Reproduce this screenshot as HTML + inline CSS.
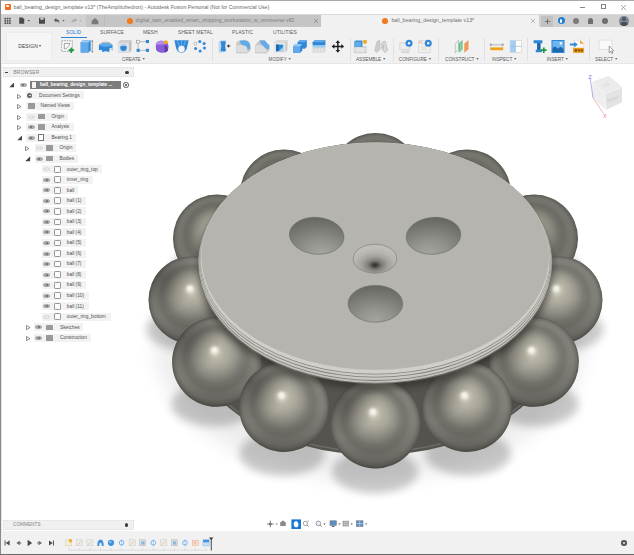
<!DOCTYPE html><html><head><meta charset="utf-8"><title>Fusion</title><style>
*{margin:0;padding:0;box-sizing:border-box}
html,body{width:634px;height:555px;overflow:hidden;background:#fff}
body{position:relative;font-family:"Liberation Sans",sans-serif;color:#555}
.abs{position:absolute}
.t{position:absolute;white-space:nowrap;line-height:1}
#title{left:0;top:0;width:634px;height:14px;background:#fff}
#tabbar{left:0;top:14px;width:634px;height:13px;background:#d1d1d1}
#ribbon{left:0;top:27px;width:634px;height:37px;background:#f1f1f1;border-bottom:1px solid #e6e6e6}
#canvas{left:0;top:64px;width:634px;height:467px;background:#fff}
.rt{font-size:5px;color:#5c5c5c;top:30px;letter-spacing:0.05px}
.gl{font-size:4.7px;color:#5a5a5a;top:57.8px}
.sep{position:absolute;top:38px;width:1px;height:23px;background:#e0e0e0}
.ic{position:absolute;top:41px;width:13px;height:13px}
.lbl{position:absolute;height:8px;background:#f2f2f2}
.lt{position:absolute;white-space:nowrap;line-height:1;font-size:4.8px;color:#4e4e4e}
.eye{position:absolute;width:7px;height:4px;border-radius:50%;background:#a9a9a9}
.eye.off{background:#dedede}
.fold{position:absolute;width:7px;height:5.4px;background:#9a9a9a;border-radius:0.6px}
.body{position:absolute;width:6.4px;height:6.8px;border:0.7px solid #969696;border-radius:1.2px;background:#fbfbfb}
.arr{position:absolute;width:0;height:0;border-style:solid}
</style></head><body>
<div id="canvas" class="abs"></div>
<svg class="abs" style="left:0;top:0" width="634" height="555" viewBox="0 0 634 555">
<defs>
<filter id="blur8" x="-50%" y="-50%" width="200%" height="200%"><feGaussianBlur stdDeviation="4.2"/></filter>
<filter id="blur3" x="-10%" y="-10%" width="120%" height="120%"><feGaussianBlur stdDeviation="3.2"/></filter>
<filter id="blur14" x="-50%" y="-50%" width="200%" height="200%"><feGaussianBlur stdDeviation="10"/></filter>
<radialGradient id="bg0" gradientUnits="userSpaceOnUse" cx="375.5" cy="423.5" r="44.9" fx="372.5" fy="411.0"><stop offset="0" stop-color="#ffffff"/><stop offset="0.05" stop-color="#fbf9ee"/><stop offset="0.085" stop-color="#dfdccf"/><stop offset="0.13" stop-color="#c4c1b3"/><stop offset="0.2" stop-color="#b5b2a4"/><stop offset="0.32" stop-color="#a9a79a"/><stop offset="0.43" stop-color="#9a988d"/><stop offset="0.52" stop-color="#8a8980"/><stop offset="0.6" stop-color="#7b7a73"/><stop offset="0.7" stop-color="#75746d"/><stop offset="0.79" stop-color="#7f7e77"/><stop offset="0.88" stop-color="#81807a"/><stop offset="0.95" stop-color="#72716a"/><stop offset="1" stop-color="#5b5a54"/></radialGradient>
<radialGradient id="bg30" gradientUnits="userSpaceOnUse" cx="467.0" cy="407.0" r="44.9" fx="464.0" fy="394.5"><stop offset="0" stop-color="#ffffff"/><stop offset="0.05" stop-color="#fbf9ee"/><stop offset="0.085" stop-color="#dfdccf"/><stop offset="0.13" stop-color="#c4c1b3"/><stop offset="0.2" stop-color="#b5b2a4"/><stop offset="0.32" stop-color="#a9a79a"/><stop offset="0.43" stop-color="#9a988d"/><stop offset="0.52" stop-color="#8a8980"/><stop offset="0.6" stop-color="#7b7a73"/><stop offset="0.7" stop-color="#75746d"/><stop offset="0.79" stop-color="#7f7e77"/><stop offset="0.88" stop-color="#81807a"/><stop offset="0.95" stop-color="#72716a"/><stop offset="1" stop-color="#5b5a54"/></radialGradient>
<radialGradient id="bg60" gradientUnits="userSpaceOnUse" cx="534.0" cy="361.9" r="44.9" fx="531.0" fy="349.4"><stop offset="0" stop-color="#ffffff"/><stop offset="0.05" stop-color="#fbf9ee"/><stop offset="0.085" stop-color="#dfdccf"/><stop offset="0.13" stop-color="#c4c1b3"/><stop offset="0.2" stop-color="#b5b2a4"/><stop offset="0.32" stop-color="#a9a79a"/><stop offset="0.43" stop-color="#9a988d"/><stop offset="0.52" stop-color="#8a8980"/><stop offset="0.6" stop-color="#7b7a73"/><stop offset="0.7" stop-color="#75746d"/><stop offset="0.79" stop-color="#7f7e77"/><stop offset="0.88" stop-color="#81807a"/><stop offset="0.95" stop-color="#72716a"/><stop offset="1" stop-color="#5b5a54"/></radialGradient>
<radialGradient id="bg90" gradientUnits="userSpaceOnUse" cx="558.5" cy="300.2" r="44.0" fx="555.5" fy="287.8"><stop offset="0" stop-color="#ffffff"/><stop offset="0.05" stop-color="#fbf9ee"/><stop offset="0.085" stop-color="#dfdccf"/><stop offset="0.13" stop-color="#c4c1b3"/><stop offset="0.2" stop-color="#b5b2a4"/><stop offset="0.32" stop-color="#a9a79a"/><stop offset="0.43" stop-color="#9a988d"/><stop offset="0.52" stop-color="#8a8980"/><stop offset="0.6" stop-color="#7b7a73"/><stop offset="0.7" stop-color="#75746d"/><stop offset="0.79" stop-color="#7f7e77"/><stop offset="0.88" stop-color="#81807a"/><stop offset="0.95" stop-color="#72716a"/><stop offset="1" stop-color="#5b5a54"/></radialGradient>
<radialGradient id="bg120" gradientUnits="userSpaceOnUse" cx="534.0" cy="238.6" r="44.0" fx="531.0" fy="226.1"><stop offset="0" stop-color="#ffffff"/><stop offset="0.05" stop-color="#fbf9ee"/><stop offset="0.085" stop-color="#dfdccf"/><stop offset="0.13" stop-color="#c4c1b3"/><stop offset="0.2" stop-color="#b5b2a4"/><stop offset="0.32" stop-color="#a9a79a"/><stop offset="0.43" stop-color="#9a988d"/><stop offset="0.52" stop-color="#8a8980"/><stop offset="0.6" stop-color="#7b7a73"/><stop offset="0.7" stop-color="#75746d"/><stop offset="0.79" stop-color="#7f7e77"/><stop offset="0.88" stop-color="#81807a"/><stop offset="0.95" stop-color="#72716a"/><stop offset="1" stop-color="#5b5a54"/></radialGradient>
<radialGradient id="bg150" gradientUnits="userSpaceOnUse" cx="467.0" cy="193.5" r="44.0" fx="464.0" fy="181.0"><stop offset="0" stop-color="#ffffff"/><stop offset="0.05" stop-color="#fbf9ee"/><stop offset="0.085" stop-color="#dfdccf"/><stop offset="0.13" stop-color="#c4c1b3"/><stop offset="0.2" stop-color="#b5b2a4"/><stop offset="0.32" stop-color="#a9a79a"/><stop offset="0.43" stop-color="#9a988d"/><stop offset="0.52" stop-color="#8a8980"/><stop offset="0.6" stop-color="#7b7a73"/><stop offset="0.7" stop-color="#75746d"/><stop offset="0.79" stop-color="#7f7e77"/><stop offset="0.88" stop-color="#81807a"/><stop offset="0.95" stop-color="#72716a"/><stop offset="1" stop-color="#5b5a54"/></radialGradient>
<radialGradient id="bg180" gradientUnits="userSpaceOnUse" cx="375.5" cy="177.0" r="44.0" fx="372.5" fy="164.5"><stop offset="0" stop-color="#ffffff"/><stop offset="0.05" stop-color="#fbf9ee"/><stop offset="0.085" stop-color="#dfdccf"/><stop offset="0.13" stop-color="#c4c1b3"/><stop offset="0.2" stop-color="#b5b2a4"/><stop offset="0.32" stop-color="#a9a79a"/><stop offset="0.43" stop-color="#9a988d"/><stop offset="0.52" stop-color="#8a8980"/><stop offset="0.6" stop-color="#7b7a73"/><stop offset="0.7" stop-color="#75746d"/><stop offset="0.79" stop-color="#7f7e77"/><stop offset="0.88" stop-color="#81807a"/><stop offset="0.95" stop-color="#72716a"/><stop offset="1" stop-color="#5b5a54"/></radialGradient>
<radialGradient id="bg210" gradientUnits="userSpaceOnUse" cx="284.0" cy="193.5" r="44.0" fx="281.0" fy="181.0"><stop offset="0" stop-color="#ffffff"/><stop offset="0.05" stop-color="#fbf9ee"/><stop offset="0.085" stop-color="#dfdccf"/><stop offset="0.13" stop-color="#c4c1b3"/><stop offset="0.2" stop-color="#b5b2a4"/><stop offset="0.32" stop-color="#a9a79a"/><stop offset="0.43" stop-color="#9a988d"/><stop offset="0.52" stop-color="#8a8980"/><stop offset="0.6" stop-color="#7b7a73"/><stop offset="0.7" stop-color="#75746d"/><stop offset="0.79" stop-color="#7f7e77"/><stop offset="0.88" stop-color="#81807a"/><stop offset="0.95" stop-color="#72716a"/><stop offset="1" stop-color="#5b5a54"/></radialGradient>
<radialGradient id="bg240" gradientUnits="userSpaceOnUse" cx="217.0" cy="238.6" r="44.0" fx="214.0" fy="226.1"><stop offset="0" stop-color="#ffffff"/><stop offset="0.05" stop-color="#fbf9ee"/><stop offset="0.085" stop-color="#dfdccf"/><stop offset="0.13" stop-color="#c4c1b3"/><stop offset="0.2" stop-color="#b5b2a4"/><stop offset="0.32" stop-color="#a9a79a"/><stop offset="0.43" stop-color="#9a988d"/><stop offset="0.52" stop-color="#8a8980"/><stop offset="0.6" stop-color="#7b7a73"/><stop offset="0.7" stop-color="#75746d"/><stop offset="0.79" stop-color="#7f7e77"/><stop offset="0.88" stop-color="#81807a"/><stop offset="0.95" stop-color="#72716a"/><stop offset="1" stop-color="#5b5a54"/></radialGradient>
<radialGradient id="bg270" gradientUnits="userSpaceOnUse" cx="192.5" cy="300.2" r="44.0" fx="189.5" fy="287.8"><stop offset="0" stop-color="#ffffff"/><stop offset="0.05" stop-color="#fbf9ee"/><stop offset="0.085" stop-color="#dfdccf"/><stop offset="0.13" stop-color="#c4c1b3"/><stop offset="0.2" stop-color="#b5b2a4"/><stop offset="0.32" stop-color="#a9a79a"/><stop offset="0.43" stop-color="#9a988d"/><stop offset="0.52" stop-color="#8a8980"/><stop offset="0.6" stop-color="#7b7a73"/><stop offset="0.7" stop-color="#75746d"/><stop offset="0.79" stop-color="#7f7e77"/><stop offset="0.88" stop-color="#81807a"/><stop offset="0.95" stop-color="#72716a"/><stop offset="1" stop-color="#5b5a54"/></radialGradient>
<radialGradient id="bg300" gradientUnits="userSpaceOnUse" cx="217.0" cy="361.9" r="44.9" fx="214.0" fy="349.4"><stop offset="0" stop-color="#ffffff"/><stop offset="0.05" stop-color="#fbf9ee"/><stop offset="0.085" stop-color="#dfdccf"/><stop offset="0.13" stop-color="#c4c1b3"/><stop offset="0.2" stop-color="#b5b2a4"/><stop offset="0.32" stop-color="#a9a79a"/><stop offset="0.43" stop-color="#9a988d"/><stop offset="0.52" stop-color="#8a8980"/><stop offset="0.6" stop-color="#7b7a73"/><stop offset="0.7" stop-color="#75746d"/><stop offset="0.79" stop-color="#7f7e77"/><stop offset="0.88" stop-color="#81807a"/><stop offset="0.95" stop-color="#72716a"/><stop offset="1" stop-color="#5b5a54"/></radialGradient>
<radialGradient id="bg330" gradientUnits="userSpaceOnUse" cx="284.0" cy="407.0" r="44.9" fx="281.0" fy="394.5"><stop offset="0" stop-color="#ffffff"/><stop offset="0.05" stop-color="#fbf9ee"/><stop offset="0.085" stop-color="#dfdccf"/><stop offset="0.13" stop-color="#c4c1b3"/><stop offset="0.2" stop-color="#b5b2a4"/><stop offset="0.32" stop-color="#a9a79a"/><stop offset="0.43" stop-color="#9a988d"/><stop offset="0.52" stop-color="#8a8980"/><stop offset="0.6" stop-color="#7b7a73"/><stop offset="0.7" stop-color="#75746d"/><stop offset="0.79" stop-color="#7f7e77"/><stop offset="0.88" stop-color="#81807a"/><stop offset="0.95" stop-color="#72716a"/><stop offset="1" stop-color="#5b5a54"/></radialGradient>
<radialGradient id="holeL" cx="0.62" cy="0.95" r="0.95"><stop offset="0" stop-color="#a5a59f"/><stop offset="0.35" stop-color="#92928c"/><stop offset="0.7" stop-color="#7a7a75"/><stop offset="1" stop-color="#666662"/></radialGradient>
<radialGradient id="holeR" cx="0.38" cy="0.95" r="0.95"><stop offset="0" stop-color="#a5a59f"/><stop offset="0.35" stop-color="#92928c"/><stop offset="0.7" stop-color="#7a7a75"/><stop offset="1" stop-color="#666662"/></radialGradient>
<radialGradient id="holeB" cx="0.5" cy="0.95" r="0.95"><stop offset="0" stop-color="#a5a59f"/><stop offset="0.35" stop-color="#92928c"/><stop offset="0.7" stop-color="#7a7a75"/><stop offset="1" stop-color="#666662"/></radialGradient>
<radialGradient id="csink" cx="0.5" cy="0.72" r="0.62"><stop offset="0" stop-color="#2c2c2a"/><stop offset="0.09" stop-color="#454542"/><stop offset="0.24" stop-color="#7c7b76"/><stop offset="0.48" stop-color="#a2a19b"/><stop offset="0.75" stop-color="#b7b6b0"/><stop offset="1" stop-color="#bfbeb8"/></radialGradient>
<linearGradient id="bodyg" x1="0" y1="0" x2="1" y2="0"><stop offset="0" stop-color="#52514d"/><stop offset="0.5" stop-color="#565551"/><stop offset="1" stop-color="#4e4d49"/></linearGradient>
<linearGradient id="topshade" gradientUnits="userSpaceOnUse" x1="0" y1="0" x2="0" y2="1"><stop offset="0" stop-color="#000" stop-opacity="0.25"/><stop offset="1" stop-color="#000" stop-opacity="0"/></linearGradient>
<radialGradient id="sh0" gradientUnits="userSpaceOnUse" cx="341.8" cy="398.8" r="38.2"><stop offset="0" stop-color="#2a2925" stop-opacity="0.42"/><stop offset="0.5" stop-color="#2a2925" stop-opacity="0.22"/><stop offset="1" stop-color="#2a2925" stop-opacity="0"/></radialGradient>
<radialGradient id="sh30" gradientUnits="userSpaceOnUse" cx="433.3" cy="382.3" r="38.2"><stop offset="0" stop-color="#2a2925" stop-opacity="0.42"/><stop offset="0.5" stop-color="#2a2925" stop-opacity="0.22"/><stop offset="1" stop-color="#2a2925" stop-opacity="0"/></radialGradient>
<radialGradient id="sh60" gradientUnits="userSpaceOnUse" cx="500.3" cy="337.2" r="38.2"><stop offset="0" stop-color="#2a2925" stop-opacity="0.42"/><stop offset="0.5" stop-color="#2a2925" stop-opacity="0.22"/><stop offset="1" stop-color="#2a2925" stop-opacity="0"/></radialGradient>
<radialGradient id="sh90" gradientUnits="userSpaceOnUse" cx="525.5" cy="276.1" r="37.4"><stop offset="0" stop-color="#2a2925" stop-opacity="0.42"/><stop offset="0.5" stop-color="#2a2925" stop-opacity="0.22"/><stop offset="1" stop-color="#2a2925" stop-opacity="0"/></radialGradient>
<radialGradient id="sh120" gradientUnits="userSpaceOnUse" cx="501.0" cy="214.4" r="37.4"><stop offset="0" stop-color="#2a2925" stop-opacity="0.42"/><stop offset="0.5" stop-color="#2a2925" stop-opacity="0.22"/><stop offset="1" stop-color="#2a2925" stop-opacity="0"/></radialGradient>
<radialGradient id="sh150" gradientUnits="userSpaceOnUse" cx="434.0" cy="169.3" r="37.4"><stop offset="0" stop-color="#2a2925" stop-opacity="0.42"/><stop offset="0.5" stop-color="#2a2925" stop-opacity="0.22"/><stop offset="1" stop-color="#2a2925" stop-opacity="0"/></radialGradient>
<radialGradient id="sh180" gradientUnits="userSpaceOnUse" cx="342.5" cy="152.8" r="37.4"><stop offset="0" stop-color="#2a2925" stop-opacity="0.42"/><stop offset="0.5" stop-color="#2a2925" stop-opacity="0.22"/><stop offset="1" stop-color="#2a2925" stop-opacity="0"/></radialGradient>
<radialGradient id="sh210" gradientUnits="userSpaceOnUse" cx="251.0" cy="169.3" r="37.4"><stop offset="0" stop-color="#2a2925" stop-opacity="0.42"/><stop offset="0.5" stop-color="#2a2925" stop-opacity="0.22"/><stop offset="1" stop-color="#2a2925" stop-opacity="0"/></radialGradient>
<radialGradient id="sh240" gradientUnits="userSpaceOnUse" cx="184.0" cy="214.4" r="37.4"><stop offset="0" stop-color="#2a2925" stop-opacity="0.42"/><stop offset="0.5" stop-color="#2a2925" stop-opacity="0.22"/><stop offset="1" stop-color="#2a2925" stop-opacity="0"/></radialGradient>
<radialGradient id="sh270" gradientUnits="userSpaceOnUse" cx="159.5" cy="276.1" r="37.4"><stop offset="0" stop-color="#2a2925" stop-opacity="0.42"/><stop offset="0.5" stop-color="#2a2925" stop-opacity="0.22"/><stop offset="1" stop-color="#2a2925" stop-opacity="0"/></radialGradient>
<radialGradient id="sh300" gradientUnits="userSpaceOnUse" cx="183.3" cy="337.2" r="38.2"><stop offset="0" stop-color="#2a2925" stop-opacity="0.42"/><stop offset="0.5" stop-color="#2a2925" stop-opacity="0.22"/><stop offset="1" stop-color="#2a2925" stop-opacity="0"/></radialGradient>
<radialGradient id="sh330" gradientUnits="userSpaceOnUse" cx="250.3" cy="382.3" r="38.2"><stop offset="0" stop-color="#2a2925" stop-opacity="0.42"/><stop offset="0.5" stop-color="#2a2925" stop-opacity="0.22"/><stop offset="1" stop-color="#2a2925" stop-opacity="0"/></radialGradient>
<linearGradient id="bd0" gradientUnits="userSpaceOnUse" x1="0" y1="423.5" x2="0" y2="468.4"><stop offset="0" stop-color="#24231f" stop-opacity="0"/><stop offset="0.55" stop-color="#24231f" stop-opacity="0.14"/><stop offset="1" stop-color="#24231f" stop-opacity="0.36"/></linearGradient>
<linearGradient id="bd30" gradientUnits="userSpaceOnUse" x1="0" y1="407.0" x2="0" y2="451.9"><stop offset="0" stop-color="#24231f" stop-opacity="0"/><stop offset="0.55" stop-color="#24231f" stop-opacity="0.14"/><stop offset="1" stop-color="#24231f" stop-opacity="0.36"/></linearGradient>
<linearGradient id="bd60" gradientUnits="userSpaceOnUse" x1="0" y1="361.9" x2="0" y2="406.8"><stop offset="0" stop-color="#24231f" stop-opacity="0"/><stop offset="0.55" stop-color="#24231f" stop-opacity="0.14"/><stop offset="1" stop-color="#24231f" stop-opacity="0.36"/></linearGradient>
<linearGradient id="bd90" gradientUnits="userSpaceOnUse" x1="0" y1="300.2" x2="0" y2="344.2"><stop offset="0" stop-color="#24231f" stop-opacity="0"/><stop offset="0.55" stop-color="#24231f" stop-opacity="0.14"/><stop offset="1" stop-color="#24231f" stop-opacity="0.36"/></linearGradient>
<linearGradient id="bd120" gradientUnits="userSpaceOnUse" x1="0" y1="238.6" x2="0" y2="282.6"><stop offset="0" stop-color="#24231f" stop-opacity="0"/><stop offset="0.55" stop-color="#24231f" stop-opacity="0.14"/><stop offset="1" stop-color="#24231f" stop-opacity="0.36"/></linearGradient>
<linearGradient id="bd150" gradientUnits="userSpaceOnUse" x1="0" y1="193.5" x2="0" y2="237.5"><stop offset="0" stop-color="#24231f" stop-opacity="0"/><stop offset="0.55" stop-color="#24231f" stop-opacity="0.14"/><stop offset="1" stop-color="#24231f" stop-opacity="0.36"/></linearGradient>
<linearGradient id="bd180" gradientUnits="userSpaceOnUse" x1="0" y1="177.0" x2="0" y2="221.0"><stop offset="0" stop-color="#24231f" stop-opacity="0"/><stop offset="0.55" stop-color="#24231f" stop-opacity="0.14"/><stop offset="1" stop-color="#24231f" stop-opacity="0.36"/></linearGradient>
<linearGradient id="bd210" gradientUnits="userSpaceOnUse" x1="0" y1="193.5" x2="0" y2="237.5"><stop offset="0" stop-color="#24231f" stop-opacity="0"/><stop offset="0.55" stop-color="#24231f" stop-opacity="0.14"/><stop offset="1" stop-color="#24231f" stop-opacity="0.36"/></linearGradient>
<linearGradient id="bd240" gradientUnits="userSpaceOnUse" x1="0" y1="238.6" x2="0" y2="282.6"><stop offset="0" stop-color="#24231f" stop-opacity="0"/><stop offset="0.55" stop-color="#24231f" stop-opacity="0.14"/><stop offset="1" stop-color="#24231f" stop-opacity="0.36"/></linearGradient>
<linearGradient id="bd270" gradientUnits="userSpaceOnUse" x1="0" y1="300.2" x2="0" y2="344.2"><stop offset="0" stop-color="#24231f" stop-opacity="0"/><stop offset="0.55" stop-color="#24231f" stop-opacity="0.14"/><stop offset="1" stop-color="#24231f" stop-opacity="0.36"/></linearGradient>
<linearGradient id="bd300" gradientUnits="userSpaceOnUse" x1="0" y1="361.9" x2="0" y2="406.8"><stop offset="0" stop-color="#24231f" stop-opacity="0"/><stop offset="0.55" stop-color="#24231f" stop-opacity="0.14"/><stop offset="1" stop-color="#24231f" stop-opacity="0.36"/></linearGradient>
<linearGradient id="bd330" gradientUnits="userSpaceOnUse" x1="0" y1="407.0" x2="0" y2="451.9"><stop offset="0" stop-color="#24231f" stop-opacity="0"/><stop offset="0.55" stop-color="#24231f" stop-opacity="0.14"/><stop offset="1" stop-color="#24231f" stop-opacity="0.36"/></linearGradient>
</defs>
<g filter="url(#blur14)" fill="#000" opacity="0.07"><ellipse cx="370" cy="345" rx="215" ry="135"/></g>
<g filter="url(#blur8)" fill="#000" opacity="0.2">
<ellipse cx="375.0" cy="471.5" rx="43" ry="22"/>
<ellipse cx="467.9" cy="453.7" rx="43" ry="22"/>
<ellipse cx="535.9" cy="404.3" rx="43" ry="22"/>
<ellipse cx="560.7" cy="329.3" rx="43" ry="22"/>
<ellipse cx="535.9" cy="267.6" rx="43" ry="22"/>
<ellipse cx="467.9" cy="222.5" rx="43" ry="22"/>
<ellipse cx="375.0" cy="206.0" rx="43" ry="22"/>
<ellipse cx="282.1" cy="222.5" rx="43" ry="22"/>
<ellipse cx="214.1" cy="267.6" rx="43" ry="22"/>
<ellipse cx="189.3" cy="329.2" rx="43" ry="22"/>
<ellipse cx="214.1" cy="404.3" rx="43" ry="22"/>
<ellipse cx="282.1" cy="453.7" rx="43" ry="22"/>
</g>
<path d="M186,326 A189,129 0 0 0 564,326 L564,286 L186,286 Z" fill="url(#bodyg)"/>
<path d="M186,323 A189,129 0 0 0 564,323" fill="none" stroke="#6f6e68" stroke-width="1.2"/>
<circle cx="375.5" cy="177.0" r="44.0" fill="url(#bg180)"/>
<circle cx="375.5" cy="177.0" r="44.0" fill="#2a2925" opacity="0.12"/>
<circle cx="467.0" cy="193.5" r="44.0" fill="url(#bg150)"/>
<circle cx="467.0" cy="193.5" r="44.0" fill="#2a2925" opacity="0.12"/>
<circle cx="284.0" cy="193.5" r="44.0" fill="url(#bg210)"/>
<circle cx="284.0" cy="193.5" r="44.0" fill="#2a2925" opacity="0.12"/>
<circle cx="217.0" cy="238.6" r="44.0" fill="url(#bg240)"/>
<circle cx="217.0" cy="238.6" r="44.0" fill="#2a2925" opacity="0.12"/>
<circle cx="534.0" cy="238.6" r="44.0" fill="url(#bg120)"/>
<circle cx="534.0" cy="238.6" r="44.0" fill="#2a2925" opacity="0.12"/>
<circle cx="558.5" cy="300.2" r="44.0" fill="url(#bg90)"/>
<circle cx="558.5" cy="300.2" r="44.0" fill="url(#sh90)"/><circle cx="558.5" cy="300.2" r="44.0" fill="url(#bd90)"/>
<circle cx="192.5" cy="300.2" r="44.0" fill="url(#bg270)"/>
<circle cx="192.5" cy="300.2" r="44.0" fill="url(#sh270)"/><circle cx="192.5" cy="300.2" r="44.0" fill="url(#bd270)"/>
<circle cx="534.0" cy="361.9" r="44.9" fill="url(#bg60)"/>
<circle cx="534.0" cy="361.9" r="44.9" fill="url(#sh60)"/><circle cx="534.0" cy="361.9" r="44.9" fill="url(#bd60)"/>
<circle cx="217.0" cy="361.9" r="44.9" fill="url(#bg300)"/>
<circle cx="217.0" cy="361.9" r="44.9" fill="url(#sh300)"/><circle cx="217.0" cy="361.9" r="44.9" fill="url(#bd300)"/>
<circle cx="284.0" cy="407.0" r="44.9" fill="url(#bg330)"/>
<circle cx="284.0" cy="407.0" r="44.9" fill="url(#sh330)"/><circle cx="284.0" cy="407.0" r="44.9" fill="url(#bd330)"/>
<circle cx="467.0" cy="407.0" r="44.9" fill="url(#bg30)"/>
<circle cx="467.0" cy="407.0" r="44.9" fill="url(#sh30)"/><circle cx="467.0" cy="407.0" r="44.9" fill="url(#bd30)"/>
<circle cx="375.5" cy="423.5" r="44.9" fill="url(#bg0)"/>
<circle cx="375.5" cy="423.5" r="44.9" fill="url(#sh0)"/><circle cx="375.5" cy="423.5" r="44.9" fill="url(#bd0)"/>
<clipPath id="solid">
<circle cx="375.5" cy="423.5" r="44.9"/>
<circle cx="467.0" cy="407.0" r="44.9"/>
<circle cx="534.0" cy="361.9" r="44.9"/>
<circle cx="558.5" cy="300.2" r="44.0"/>
<circle cx="534.0" cy="238.6" r="44.0"/>
<circle cx="467.0" cy="193.5" r="44.0"/>
<circle cx="375.5" cy="177.0" r="44.0"/>
<circle cx="284.0" cy="193.5" r="44.0"/>
<circle cx="217.0" cy="238.6" r="44.0"/>
<circle cx="192.5" cy="300.2" r="44.0"/>
<circle cx="217.0" cy="361.9" r="44.9"/>
<circle cx="284.0" cy="407.0" r="44.9"/>
<path d="M186,326 A189,129 0 0 0 564,326 L564,286 L186,286 Z"/>
</clipPath>
<g clip-path="url(#solid)"><ellipse cx="375.2" cy="268.5" rx="177.5" ry="121" fill="#1c1b18" opacity="0.45" filter="url(#blur3)"/></g>
<ellipse cx="375.2" cy="263.00" rx="177.30" ry="120.90" fill="#74736d"/>
<ellipse cx="375.2" cy="262.61" rx="176.64" ry="120.09" fill="#c2c1bb"/>
<ellipse cx="375.2" cy="261.74" rx="176.24" ry="119.16" fill="#7d7c76"/>
<ellipse cx="375.2" cy="261.31" rx="176.04" ry="118.69" fill="#c9c8c2"/>
<ellipse cx="375.2" cy="260.15" rx="175.51" ry="117.45" fill="#7d7c76"/>
<ellipse cx="375.2" cy="259.72" rx="175.31" ry="116.98" fill="#cccbc5"/>
<ellipse cx="375.2" cy="258.71" rx="174.84" ry="115.89" fill="#84837d"/>
<ellipse cx="375.2" cy="258.27" rx="174.64" ry="115.43" fill="#d0cfc9"/>
<ellipse cx="375.2" cy="256.49" rx="173.81" ry="113.51" fill="#c0bfb9"/>
<ellipse cx="375.2" cy="256.25" rx="173.70" ry="113.25" fill="#b5b4ae"/>
<ellipse cx="316.7" cy="235.8" rx="27.3" ry="18.4" fill="url(#holeL)" stroke="#6a6a66" stroke-width="0.6" transform="rotate(5 316.7 235.8)"/>
<ellipse cx="433.5" cy="235.8" rx="27.3" ry="18.4" fill="url(#holeR)" stroke="#6a6a66" stroke-width="0.6" transform="rotate(-5 433.5 235.8)"/>
<ellipse cx="375.4" cy="303.8" rx="27.3" ry="18.4" fill="url(#holeB)" stroke="#6a6a66" stroke-width="0.6" transform="rotate(0 375.4 303.8)"/>
<ellipse cx="375" cy="258.7" rx="21.8" ry="14.5" fill="url(#csink)" stroke="#74736e" stroke-width="0.55"/>
</svg>
<div id="title" class="abs"></div>
<div class="abs" style="left:4.7px;top:3.6px;width:6.1px;height:6.4px;background:#f26a1b;border-radius:1.1px"></div>
<div class="abs" style="left:6.4px;top:4.5px;width:2.7px;height:2.7px;background:#fff;border-radius:0.8px"></div>
<div class="t" id="ttl" style="left:13.5px;top:4.5px;font-size:5.24px;color:#6a6a6a">ball_bearing_design_template v13* (TheAmplituhedron) - Autodesk Fusion Personal (Not for Commercial Use)</div>
<div class="abs" style="left:580px;top:6.5px;width:5px;height:0.7px;background:#8a8a8a"></div>
<div class="abs" style="left:601px;top:4px;width:5px;height:5px;border:0.7px solid #858585"></div>
<svg class="abs" style="left:620px;top:3.5px" width="7" height="7" viewBox="0 0 7 7"><path d="M1,1 L6,6 M6,1 L1,6" stroke="#7d7d7d" stroke-width="0.7" fill="none"/></svg>
<div id="tabbar" class="abs"></div>
<div class="abs" style="left:0;top:14px;width:634px;height:1px;background:#d9d9d9"></div>
<div class="abs" style="left:85.6px;top:15px;width:236px;height:12px;background:#c5c5c5"></div>
<div class="abs" style="left:321.3px;top:15px;width:218px;height:12px;background:#f1f1f1"></div>
<div class="abs" style="left:541px;top:15.5px;width:11.5px;height:11px;background:#c1c1c1"></div>
<svg class="abs" style="left:0;top:14px" width="110" height="13" viewBox="0 0 110 13"><g fill="#4a4a4a"><rect x="4.5" y="3.8" width="1.6" height="1.6"/><rect x="6.8" y="3.8" width="1.6" height="1.6"/><rect x="9.1" y="3.8" width="1.6" height="1.6"/><rect x="4.5" y="6.1" width="1.6" height="1.6"/><rect x="6.8" y="6.1" width="1.6" height="1.6"/><rect x="9.1" y="6.1" width="1.6" height="1.6"/><rect x="4.5" y="8.4" width="1.6" height="1.6"/><rect x="6.8" y="8.4" width="1.6" height="1.6"/><rect x="9.1" y="8.4" width="1.6" height="1.6"/><path d="M19.2,3.6 h3.4 l1.6,1.6 v4.6 h-5z"/><path d="M27.6,6 h2.4 l-1.2,1.5z"/><rect x="39" y="3.8" width="6" height="6" rx="0.6"/></g><rect x="40.4" y="3.8" width="3.2" height="2" fill="#cdcdcd"/><path d="M54,6 l2.2,-2 v1.3 q3.2,0 3.2,4 q-1,-2 -3.2,-2 v1.3z" fill="#5a5a5a"/><path d="M62.4,6 h2.2 l-1.1,1.4z" fill="#5a5a5a"/><path d="M77,6 l-2.2,-2 v1.3 q-3.2,0 -3.2,4 q1,-2 3.2,-2 v1.3z" fill="#aaa"/><path d="M79.4,6 h2.2 l-1.1,1.4z" fill="#aaa"/><path d="M91.7,7 l3.3,-3 l3.3,3 v3.2 h-6.6z" fill="#7a7a7a"/></svg>
<div class="abs" style="left:104px;top:15px;width:0.6px;height:12px;background:#bcbcbc"></div>
<div class="abs" style="left:126.7px;top:17.5px;width:6px;height:6px;background:#f07a1f;border-radius:50% 50% 45% 45%"></div>
<div class="t" id="tab1" style="left:135.6px;top:18.2px;font-size:5.24px;color:#808080">digital_twin_enabled_smart_shipping_workstation_w_omniverse v82</div>
<svg class="abs" style="left:313px;top:18px" width="6" height="6" viewBox="0 0 6 6"><path d="M1,1 L5,5 M5,1 L1,5" stroke="#777" stroke-width="0.6" fill="none"/></svg>
<div class="abs" style="left:382.4px;top:17.5px;width:6px;height:6px;background:#f07a1f;border-radius:50% 50% 45% 45%"></div>
<div class="t" id="tab2" style="left:391.4px;top:18.2px;font-size:5.3px;color:#6e6e6e">ball_bearing_design_template v13*</div>
<svg class="abs" style="left:530px;top:18px" width="6" height="6" viewBox="0 0 6 6"><path d="M1,1 L5,5 M5,1 L1,5" stroke="#999" stroke-width="0.6" fill="none"/></svg>
<svg class="abs" style="left:543.5px;top:18px" width="7" height="7" viewBox="0 0 7 7"><path d="M3.5,0.8 V6.2 M0.8,3.5 H6.2" stroke="#555" stroke-width="0.7" fill="none"/></svg>
<div class="abs" style="left:557.5px;top:17.2px;width:7px;height:7px;border-radius:50%;background:#1f7fd1"></div>
<div class="abs" style="left:559.8px;top:18.6px;width:2.6px;height:4.2px;border-radius:50%;background:#fff"></div>
<div class="abs" style="left:572.5px;top:17.6px;width:6.4px;height:6.4px;border-radius:50%;background:#7b7b7b"></div>
<div class="abs" style="left:587.6px;top:17.6px;width:5px;height:6px;border-radius:2.5px 2.5px 0.5px 0.5px;background:#6f6f6f"></div>
<div class="abs" style="left:601.8px;top:17.6px;width:6.4px;height:6.4px;border-radius:50%;background:#6f6f6f"></div>
<div class="abs" style="left:618.5px;top:15.5px;width:10px;height:10.5px;border-radius:50%;background:#7f8792;overflow:hidden"><div class="abs" style="left:3px;top:1.5px;width:4px;height:4.4px;border-radius:50%;background:#4d5562"></div><div class="abs" style="left:1px;top:6px;width:8px;height:6px;border-radius:50% 50% 0 0;background:#454c58"></div></div>
<div id="ribbon" class="abs"></div>
<div class="abs" style="left:5.5px;top:32px;width:46.5px;height:29px;background:#f6f6f6;border:1px solid #ececec;border-radius:1px"></div>
<div class="t" style="left:18.2px;top:43.6px;font-size:5px;color:#3c3c3c;letter-spacing:0.12px">DESIGN</div>
<div class="arr" style="left:39.4px;top:45.2px;border-width:2px 1.5px 0 1.5px;border-color:#444 transparent transparent transparent"></div>
<div class="t rt" id="rt0" style="left:66px;color:#1b7bd0">SOLID</div>
<div class="t rt" id="rt1" style="left:100px">SURFACE</div>
<div class="t rt" id="rt2" style="left:143px">MESH</div>
<div class="t rt" id="rt3" style="left:178px">SHEET METAL</div>
<div class="t rt" id="rt4" style="left:232px">PLASTIC</div>
<div class="t rt" id="rt5" style="left:273px">UTILITIES</div>
<div class="abs" style="left:61.3px;top:36.5px;width:25.3px;height:1px;background:#2a86d8"></div>
<div class="sep" style="left:212.3px"></div>
<div class="sep" style="left:349.5px"></div>
<div class="sep" style="left:392.8px"></div>
<div class="sep" style="left:437.8px"></div>
<div class="sep" style="left:484px"></div>
<div class="sep" style="left:526.6px"></div>
<div class="sep" style="left:588.7px"></div>
<div class="t gl" id="gl0" style="left:122px">CREATE <span style="font-size:3.4px;position:relative;top:-0.4px">&#9660;</span></div>
<div class="t gl" id="gl1" style="left:268.6px">MODIFY <span style="font-size:3.4px;position:relative;top:-0.4px">&#9660;</span></div>
<div class="t gl" id="gl2" style="left:355.9px">ASSEMBLE <span style="font-size:3.4px;position:relative;top:-0.4px">&#9660;</span></div>
<div class="t gl" id="gl3" style="left:398.8px">CONFIGURE <span style="font-size:3.4px;position:relative;top:-0.4px">&#9660;</span></div>
<div class="t gl" id="gl4" style="left:445px">CONSTRUCT <span style="font-size:3.4px;position:relative;top:-0.4px">&#9660;</span></div>
<div class="t gl" id="gl5" style="left:492px">INSPECT <span style="font-size:3.4px;position:relative;top:-0.4px">&#9660;</span></div>
<div class="t gl" id="gl6" style="left:546.7px">INSERT <span style="font-size:3.4px;position:relative;top:-0.4px">&#9660;</span></div>
<div class="t gl" id="gl7" style="left:595px">SELECT <span style="font-size:3.4px;position:relative;top:-0.4px">&#9660;</span></div>
<svg class="abs" style="left:0;top:27px" width="634" height="37" viewBox="0 27 634 37"><g transform="translate(60.7,39.8)"><rect x="1" y="1" width="10.6" height="10.6" fill="#fbfbfb" stroke="#6a6a6a" stroke-width="0.6" stroke-dasharray="1.6 0.9"/><path d="M3.6,9 V3.6 H9 V5 L5.4,9Z" fill="none" stroke="#7a7a7a" stroke-width="0.7"/><path d="M10.6,7.6 V13.2 M7.8,10.4 H13.4" stroke="#1f9a3c" stroke-width="1.7"/></g><g transform="translate(80.3,39.8)"><path d="M0.4,2.6 L2.6,0.4 H10.4 V10.4 L8.2,12.8 H0.4Z" fill="#2f87d8"/><path d="M0.4,2.6 H8.2 V12.8 H0.4Z" fill="#62abe8"/><path d="M0.4,2.6 L2.6,0.4 H10.4 L8.2,2.6Z" fill="#9fcdf3"/><path d="M12,0.6 V12.4 M11.2,1.8 L12,0.6 L12.8,1.8 M11.2,11.2 L12,12.4 L12.8,11.2" stroke="#555" stroke-width="0.5" fill="none"/></g><g transform="translate(98.5,39.8)"><path d="M0.6,5 Q7.2,-0.6 14,5" fill="none" stroke="#666" stroke-width="0.5"/><path d="M0.4,5.4 Q7.2,1.2 14,5.4 V10.6 Q12.4,9.6 10.8,10.4 V12.4 Q7.2,10.4 3.6,12.4 V10.4 Q2,9.6 0.4,10.6Z" fill="#2f87d8"/><path d="M0.4,5.4 Q7.2,1.2 14,5.4 Q7.2,8.6 0.4,5.4Z" fill="#62abe8"/><path d="M10.8,8.4 Q12.4,7.6 14,8 V10.6 Q12.4,9.6 10.8,10.4Z" fill="#d9d9d9"/></g><g transform="translate(117.5,39.8)"><path d="M0.4,3 L2.8,0.4 H14 V10.4 L11.6,13 H0.4Z" fill="#bdbdbd"/><path d="M0.4,3 H11.6 V13 H0.4Z" fill="#e2e2e2"/><path d="M0.4,3 L2.8,0.4 H14 L11.6,3Z" fill="#d2d2d2"/><circle cx="6" cy="8" r="3.7" fill="#2f87d8"/><path d="M3,6.6 A3.7,3.7 0 0 1 9.4,6.4 Q6.4,4.8 3,6.6Z" fill="#eaf3fb"/><circle cx="6" cy="8" r="3.7" fill="none" stroke="#f2f2f2" stroke-width="0.6"/></g><g transform="translate(136.3,39.8)"><path d="M1.8,1.8 H11 M1.8,10.6 H11 M1.8,1.8 V10.6" stroke="#8a8a8a" stroke-width="0.5" fill="none"/><rect x="0.4" y="0.4" width="2.8" height="2.8" fill="#fff" stroke="#777" stroke-width="0.5"/><rect x="9.6" y="0.2" width="3.1" height="3.1" fill="#2f87d8"/><rect x="0.3" y="9" width="3.1" height="3.1" fill="#2f87d8"/><rect x="9.6" y="9" width="3.1" height="3.1" fill="#2f87d8"/></g><g transform="translate(155.2,39.8)"><path d="M0.6,5 Q1,1.6 5.4,1 Q10,0.4 12.6,3.4 Q14.2,7 12.6,11 Q10,13.6 5,12.8 Q0.8,12.2 0.6,8Z" fill="#8a5cd8"/><path d="M0.6,5 Q1,1.6 5.4,1 Q10,0.4 12.6,3.4 Q8,5.4 0.6,5Z" fill="#b08be9"/><path d="M9.4,4.6 Q13,6 12.6,11 Q11,12.6 9.4,12.9Z" fill="#5f3aa8"/><circle cx="10.6" cy="2.4" r="2" fill="#f5a623"/></g><g transform="translate(174.2,39.8)"><path d="M0.2,0.4 H14.4 L12.6,8.6 Q10.6,13 7.3,13 Q4,13 2,8.6Z" fill="#2f87d8"/><path d="M3,0.4 L5.4,7 M11.6,0.4 L9.2,7 M7.3,0.4 V5.6" stroke="#9fcdf3" stroke-width="0.6"/><circle cx="7.3" cy="9.2" r="3.2" fill="#f4f6f8" stroke="#c9d6e2" stroke-width="0.4"/></g><g transform="translate(193.2,39.8)"><g fill="#2f87d8"><circle cx="6.6" cy="1.6" r="1.5"/><circle cx="10.9" cy="3.6" r="1.5"/><circle cx="11.3" cy="8.2" r="1.5"/><circle cx="6.9" cy="11.2" r="1.5"/><circle cx="2.4" cy="8.6" r="1.5"/></g><circle cx="2.2" cy="3.8" r="1.4" fill="#fff" stroke="#777" stroke-width="0.5"/></g><g transform="translate(218.2,39.8)"><path d="M0.4,2.4 L2.4,0.4 H8 V10.6 L6,12.8 H0.4Z" fill="#c5d5e6"/><path d="M2.4,1.4 H7.6 Q6,6.6 7.6,11.4 H2.4 Q4,6.6 2.4,1.4Z" fill="#2f87d8"/><path d="M12.4,6.2 H9.4 M10.6,5 L9.2,6.2 L10.6,7.4Z" stroke="#222" stroke-width="0.6" fill="#222"/></g><g transform="translate(236,39.8)"><path d="M0.4,5 Q0.6,1 5,0.6 H9 Q14,1 14.2,6.4 V10.4 L11.6,13 H0.4Z" fill="#c9c9c9" stroke="#b0b0b0" stroke-width="0.4"/><path d="M0.4,5.4 H6 Q11.6,5.4 11.6,10 V13 H0.4Z" fill="#dedede"/><path d="M5,0.6 H9 Q14,1 14.2,6.4 V9 L11.6,10.2 Q11.6,5.4 6,5.2 L3.6,2.2 Q4,0.8 5,0.6Z" fill="#62abe8"/><path d="M0.4,13 H11.6" stroke="#b5b5b5" stroke-width="0.5"/></g><g transform="translate(255,39.8)"><path d="M0.4,5.4 L5,0.6 H9.6 L14.2,5.6 V10.4 L11.6,13 H0.4Z" fill="#c9c9c9" stroke="#b0b0b0" stroke-width="0.4"/><path d="M0.4,5.4 H7.6 L11.6,9.4 V13 H0.4Z" fill="#dedede"/><path d="M5,0.6 H9.6 L14.2,5.6 V8.6 L11.6,9.6 L7.4,5.4 L4.6,2Z" fill="#62abe8"/><path d="M0.4,13 H11.6" stroke="#b5b5b5" stroke-width="0.5"/></g><g transform="translate(274,39.8)"><path d="M0.4,3 L3,0.4 H13.6 V10.4 L11,13 H0.4Z" fill="#cfcfcf"/><path d="M0.4,3 H11 V13 H0.4Z" fill="#e8e8e8"/><path d="M0.4,3 L3,0.4 H13.6 L11,3Z" fill="#dcdcdc"/><rect x="2" y="4.8" width="7.2" height="6.6" fill="#2f87d8"/><path d="M4.6,11.4 L9.2,7 V11.4Z" fill="#9fcdf3"/><path d="M2,4.8 H4.6 V11.4 H2Z" fill="#1f66b0"/></g><g transform="translate(292.6,39.8)"><path d="M5,2.4 L7,0.4 H14.2 V7 L12.2,9 H5Z" fill="#2f87d8"/><path d="M5,2.4 L7,0.4 H14.2 L12.2,2.4Z" fill="#62abe8"/><path d="M0.4,6.4 L2.4,4.4 H9.6 V11 L7.6,13 H0.4Z" fill="#2f87d8"/><path d="M0.4,6.4 H7.6 V13 H0.4Z" fill="#62abe8"/><path d="M0.4,6.4 L2.4,4.4 H9.6 L7.6,6.4Z" fill="#9fcdf3"/></g><g transform="translate(312.2,39.8)"><path d="M0.4,2.4 L2.4,0.4 H13.2 V5.8 H0.4Z" fill="#2f87d8"/><path d="M0.4,2.4 L2.4,0.4 H13.2 L11.2,2.4Z" fill="#62abe8"/><rect x="0.4" y="5.8" width="12.8" height="2.2" fill="#9fcdf3"/><path d="M0.4,8 H13.2 V11 L11.2,13 H0.4Z" fill="#d4d4d4"/><path d="M0.4,9.6 H12.6 M0.4,11.2 H12 M3.6,8 V13 M6.8,8 V13 M10,8 V13" stroke="#f1f1f1" stroke-width="0.5"/></g><g transform="translate(331.2,39.8)"><path d="M6.65,0.4 L9,3.2 H7.4 V5.9 H10.1 V4.3 L12.9,6.65 L10.1,9 V7.4 H7.4 V10.1 H9 L6.65,12.9 L4.3,10.1 H5.9 V7.4 H3.2 V9 L0.4,6.65 L3.2,4.3 V5.9 H5.9 V3.2 H4.3Z" fill="#222"/></g><g transform="translate(353.8,39.8)"><path d="M0.4,7 H12.4 V13 H0.4Z" fill="#dcdcdc" stroke="#a8a8a8" stroke-width="0.4"/><path d="M0.4,9 H12.4 M0.4,11 H12.4 M4.4,7 V13 M8.4,7 V13" stroke="#f4f4f4" stroke-width="0.5"/><path d="M0.6,1.8 L1.8,0.6 H8.6 V7.2 H0.6Z" fill="#2f87d8"/><path d="M0.6,1.8 H7.4 V7.2 H0.6Z" fill="#62abe8"/><circle cx="11.2" cy="2" r="2.1" fill="#f5a623"/></g><g transform="translate(374,39.8)"><path d="M0.8,11 L2.6,3 Q3.4,0.6 5.8,0.8 L6,9.4 L3,12.6Z" fill="#cdcdcd" stroke="#a9a9a9" stroke-width="0.5"/><path d="M7.6,9 L7.8,3.4 Q9,0.8 11.4,1.4 L13.6,10.6 L10.8,12.8Z" fill="#d8d8d8" stroke="#a9a9a9" stroke-width="0.5"/><path d="M9.4,5 V9" stroke="#a0a0a0" stroke-width="0.6"/></g><g transform="translate(399.4,39.8)"><path d="M0.4,3 H10.4 V10 H0.4Z" fill="#ececec" stroke="#c2c2c2" stroke-width="0.5"/><path d="M1.6,11.4 H10 M1.6,12.8 H10 M8.6,10.4 V13.2" stroke="#bdbdbd" stroke-width="0.5"/><circle cx="9.6" cy="3.4" r="3.5" fill="#2f87d8"/><circle cx="9.6" cy="3.4" r="1.2" fill="#fff"/></g><g transform="translate(418.2,39.8)"><rect x="0.4" y="1" width="11.4" height="11.6" fill="#f4f4f4" stroke="#c8c8c8" stroke-width="0.5"/><path d="M0.4,4 H11.8 M0.4,7 H11.8 M0.4,10 H11.8 M4.2,1 V12.6 M8,1 V12.6" stroke="#d0d0d0" stroke-width="0.4"/><rect x="0.8" y="1.4" width="3" height="2.2" fill="#e9c9c9"/><rect x="4.6" y="7.4" width="3" height="2.2" fill="#f1e2c2"/><circle cx="10" cy="3.4" r="3.5" fill="#2f87d8"/><circle cx="10" cy="3.4" r="1.2" fill="#fff"/></g><g transform="translate(454.9,39.8)"><path d="M0.4,4 L3.6,0.4 V9.4 L0.4,13Z" fill="#f0f0f0" stroke="#9a9a9a" stroke-width="0.5"/><path d="M3.8,3.6 L7.6,0.2 V9.6 L3.8,13Z" fill="#5bb877"/><path d="M4.8,3.6 L6.6,2 V10 L4.8,11.6Z" fill="#8fd3a3"/><path d="M9.4,3.8 L13.6,0.2 V9.4 L9.4,13Z" fill="#f0975a"/></g><g transform="translate(489.9,39.8)"><path d="M0.4,5 H13.2 M0.4,3.4 V6.6 M13.2,3.4 V6.6 M0.4,5 L2,4.2 M0.4,5 L2,5.8 M13.2,5 L11.6,4.2 M13.2,5 L11.6,5.8" stroke="#8d8d8d" stroke-width="0.6" fill="none"/><rect x="0.4" y="7.6" width="12.8" height="2.8" fill="#f0a118"/></g><g transform="translate(509.7,39.8)"><rect x="0.4" y="0.6" width="11.6" height="12" fill="#fdfdfd" stroke="#c4c4c4" stroke-width="0.5"/><rect x="0.6" y="0.8" width="5" height="11.6" fill="#9fcdf3"/><path d="M5.8,0.6 V12.6 M0.4,6.6 H12" stroke="#9bb7d3" stroke-width="0.6"/></g><g transform="translate(533.2,39.8)"><path d="M0.4,0.4 H9.2 V3.4 H7.2 V10 H8.6 V12.4 H2.6 V10 H4 V3.4 H0.4Z" fill="#2f87d8"/><path d="M4,3.4 H7.2 V10 H4Z" fill="#1f66b0"/><path d="M10.6,7.6 V13.2 M7.8,10.4 H13.4" stroke="#1f9a3c" stroke-width="1.7"/></g><g transform="translate(551.3,39.8)"><rect x="0.2" y="0.2" width="13" height="13" fill="#2f87d8"/><rect x="1.2" y="1.2" width="11" height="11" fill="#6db5ee"/><path d="M1.2,12.2 V8.6 Q3.4,5 5.4,8 Q6.4,9.4 7.4,8.2 Q9.6,5.6 12.2,9.6 V12.2Z" fill="#1f66b0"/><circle cx="9.6" cy="3.6" r="1.3" fill="#eaf5ff"/></g><g transform="translate(569.7,39.8)"><path d="M4,0.4 H10.4 L14,4 V13 H4Z" fill="#fafafa" stroke="#c9c9c9" stroke-width="0.4"/><path d="M10.4,0.4 L14,4 H10.4Z" fill="#f0a118"/><rect x="3.4" y="8" width="10.8" height="5" fill="#e89a14"/><path d="M5,9.4 H7.4 V11.8 H5Z M8.6,9.4 H10.4 V11.8 H8.6Z M11.4,9.4 H13 V11.8 H11.4Z" fill="#7a4e0a"/><path d="M0.2,3.8 H4.6 V2 L8,4.8 L4.6,7.6 V5.8 H0.2Z" fill="#2f87d8"/></g><g transform="translate(598.8,39.8)"><rect x="0.4" y="0.4" width="12.6" height="9.2" fill="#fafafa" stroke="#b9b9b9" stroke-width="0.5" stroke-dasharray="1.6 1"/><path d="M10.4,6.2 V13 L11.9,11.6 L13,13.8 L14,13.3 L12.9,11.2 L14.8,11Z" fill="#fff" stroke="#555" stroke-width="0.55"/></g></svg>
<div class="abs" style="left:2.7px;top:66.6px;width:131px;height:10.8px;background:#f0f0f0;border:0.5px dotted #dcdcdc"></div>
<div class="abs" style="left:5px;top:71.6px;width:3.4px;height:1.4px;background:#444"></div>
<div class="t" style="left:13.5px;top:70.6px;font-size:4.8px;color:#808080;letter-spacing:0.15px">BROWSER</div>
<div class="abs" style="left:125.2px;top:70.6px;width:3.6px;height:3.6px;border-radius:50%;background:#3d3d3d"></div>
<div class="abs" style="left:1px;top:65px;width:1px;height:466px;background:#e4e4e4"></div>
<svg class="abs" style="left:8.8px;top:82.30000000000001px" width="5.6" height="5.6" viewBox="0 0 5.6 5.6"><path d="M5.2,0.3 V5.2 H0.3Z" fill="#444"/></svg><div class="eye" style="left:19.5px;top:82.9px"></div><div class="abs" style="left:22px;top:83.9px;width:2px;height:2px;border-radius:50%;background:#6a6a6a"></div>
<div class="abs" style="left:29.7px;top:80.9px;width:91px;height:8px;background:#7d7d7d"></div>
<div class="abs" style="left:31.5px;top:81.7px;width:4.6px;height:6.2px;background:#f4f4f4;border-radius:0.5px"></div>
<div class="lt" id="l0" style="left:40px;top:83.0px;color:#fff;font-weight:bold;font-size:4.7px">ball_bearing_design_template ...</div>
<div class="abs" style="left:123.4px;top:82.2px;width:5.4px;height:5.4px;border-radius:50%;border:0.6px solid #555;background:#fff"></div><div class="abs" style="left:125.1px;top:83.9px;width:2px;height:2px;border-radius:50%;background:#333"></div>
<div class="lbl" style="left:26px;top:91.44px;width:57.7px"></div><div class="lt" id="l1" style="left:39px;top:93.74px">Document Settings</div><svg class="abs" style="left:17px;top:93.53999999999999px" width="4.4" height="5.2" viewBox="0 0 4.4 5.2"><path d="M0.5,0.5 L3.9,2.6 L0.5,4.7Z" fill="#fff" stroke="#444" stroke-width="0.6"/></svg><div class="abs" style="left:27px;top:92.74px;width:5.4px;height:5.4px;border-radius:50%;background:#666"></div><div class="abs" style="left:28.8px;top:94.53999999999999px;width:1.8px;height:1.8px;border-radius:50%;background:#eee"></div>
<div class="lbl" style="left:26px;top:101.98px;width:48px"></div><div class="lt" id="l2" style="left:40.5px;top:104.28px">Named Views</div><svg class="abs" style="left:17px;top:104.08px" width="4.4" height="5.2" viewBox="0 0 4.4 5.2"><path d="M0.5,0.5 L3.9,2.6 L0.5,4.7Z" fill="#fff" stroke="#444" stroke-width="0.6"/></svg><div class="fold" style="left:27.5px;top:103.28px"></div>
<div class="lbl" style="left:26px;top:112.52000000000001px;width:42px"></div><div class="lt" id="l3" style="left:51.4px;top:114.82000000000001px">Origin</div><svg class="abs" style="left:17px;top:114.62px" width="4.4" height="5.2" viewBox="0 0 4.4 5.2"><path d="M0.5,0.5 L3.9,2.6 L0.5,4.7Z" fill="#fff" stroke="#444" stroke-width="0.6"/></svg><div class="eye off" style="left:27.5px;top:114.52000000000001px"></div><div class="abs" style="left:30px;top:115.52000000000001px;width:2px;height:2px;border-radius:50%;background:#eee"></div><div class="fold" style="left:37.5px;top:113.82000000000001px"></div>
<div class="lbl" style="left:26px;top:123.06px;width:47.7px"></div><div class="lt" id="l4" style="left:51.4px;top:125.36px">Analysis</div><svg class="abs" style="left:17px;top:125.16px" width="4.4" height="5.2" viewBox="0 0 4.4 5.2"><path d="M0.5,0.5 L3.9,2.6 L0.5,4.7Z" fill="#fff" stroke="#444" stroke-width="0.6"/></svg><div class="eye" style="left:27.5px;top:125.06px"></div><div class="abs" style="left:30px;top:126.06px;width:2px;height:2px;border-radius:50%;background:#6a6a6a"></div><div class="fold" style="left:37.5px;top:124.36px"></div>
<div class="lbl" style="left:26px;top:133.6px;width:50px"></div><div class="lt" id="l5" style="left:51.4px;top:135.9px">Bearing 1</div><svg class="abs" style="left:16.9px;top:135.0px" width="5.6" height="5.6" viewBox="0 0 5.6 5.6"><path d="M5.2,0.3 V5.2 H0.3Z" fill="#444"/></svg><div class="eye" style="left:27.5px;top:135.6px"></div><div class="abs" style="left:30px;top:136.6px;width:2px;height:2px;border-radius:50%;background:#6a6a6a"></div><div class="abs" style="left:38.4px;top:134.4px;width:5.4px;height:6.4px;border:0.8px solid #777;background:#fff"></div>
<div class="lbl" style="left:34.5px;top:144.14px;width:41.5px"></div><div class="lt" id="l6" style="left:59.5px;top:146.44px">Origin</div><svg class="abs" style="left:25px;top:146.23999999999998px" width="4.4" height="5.2" viewBox="0 0 4.4 5.2"><path d="M0.5,0.5 L3.9,2.6 L0.5,4.7Z" fill="#fff" stroke="#444" stroke-width="0.6"/></svg><div class="eye off" style="left:35.5px;top:146.14px"></div><div class="abs" style="left:38px;top:147.14px;width:2px;height:2px;border-radius:50%;background:#eee"></div><div class="fold" style="left:46.0px;top:145.44px"></div>
<div class="lbl" style="left:34.5px;top:154.68px;width:43.8px"></div><div class="lt" id="l7" style="left:59.5px;top:156.98000000000002px">Bodies</div><svg class="abs" style="left:25.2px;top:156.08px" width="5.6" height="5.6" viewBox="0 0 5.6 5.6"><path d="M5.2,0.3 V5.2 H0.3Z" fill="#444"/></svg><div class="eye" style="left:35.5px;top:156.68px"></div><div class="abs" style="left:38px;top:157.68px;width:2px;height:2px;border-radius:50%;background:#6a6a6a"></div><div class="fold" style="left:46.0px;top:155.98000000000002px"></div>
<div class="lbl" style="left:42px;top:165.22px;width:59.8px"></div><div class="lt" id="l8" style="left:66.8px;top:167.52px">outer_ring_top</div><div class="eye off" style="left:43.3px;top:167.22px"></div><div class="abs" style="left:45.8px;top:168.22px;width:2px;height:2px;border-radius:50%;background:#eee"></div><div class="body" style="left:54.4px;top:165.82px"></div>
<div class="lbl" style="left:42px;top:175.76px;width:50.599999999999994px"></div><div class="lt" id="l9" style="left:66.8px;top:178.06px">inner_ring</div><div class="eye" style="left:43.3px;top:177.76px"></div><div class="abs" style="left:45.8px;top:178.76px;width:2px;height:2px;border-radius:50%;background:#6a6a6a"></div><div class="body" style="left:54.4px;top:176.35999999999999px"></div>
<div class="lbl" style="left:42px;top:186.3px;width:36.3px"></div><div class="lt" id="l10" style="left:66.8px;top:188.60000000000002px">ball</div><div class="eye" style="left:43.3px;top:188.3px"></div><div class="abs" style="left:45.8px;top:189.3px;width:2px;height:2px;border-radius:50%;background:#6a6a6a"></div><div class="body" style="left:54.4px;top:186.9px"></div>
<div class="lbl" style="left:42px;top:196.84px;width:44px"></div><div class="lt" id="l11" style="left:66.8px;top:199.14000000000001px">ball (1)</div><div class="eye" style="left:43.3px;top:198.84px"></div><div class="abs" style="left:45.8px;top:199.84px;width:2px;height:2px;border-radius:50%;background:#6a6a6a"></div><div class="body" style="left:54.4px;top:197.44px"></div>
<div class="lbl" style="left:42px;top:207.38px;width:44px"></div><div class="lt" id="l12" style="left:66.8px;top:209.68px">ball (2)</div><div class="eye" style="left:43.3px;top:209.38px"></div><div class="abs" style="left:45.8px;top:210.38px;width:2px;height:2px;border-radius:50%;background:#6a6a6a"></div><div class="body" style="left:54.4px;top:207.98px"></div>
<div class="lbl" style="left:42px;top:217.92px;width:44px"></div><div class="lt" id="l13" style="left:66.8px;top:220.22px">ball (3)</div><div class="eye" style="left:43.3px;top:219.92px"></div><div class="abs" style="left:45.8px;top:220.92px;width:2px;height:2px;border-radius:50%;background:#6a6a6a"></div><div class="body" style="left:54.4px;top:218.51999999999998px"></div>
<div class="lbl" style="left:42px;top:228.46px;width:44px"></div><div class="lt" id="l14" style="left:66.8px;top:230.76000000000002px">ball (4)</div><div class="eye" style="left:43.3px;top:230.46px"></div><div class="abs" style="left:45.8px;top:231.46px;width:2px;height:2px;border-radius:50%;background:#6a6a6a"></div><div class="body" style="left:54.4px;top:229.06px"></div>
<div class="lbl" style="left:42px;top:239.0px;width:44px"></div><div class="lt" id="l15" style="left:66.8px;top:241.3px">ball (5)</div><div class="eye" style="left:43.3px;top:241.0px"></div><div class="abs" style="left:45.8px;top:242.0px;width:2px;height:2px;border-radius:50%;background:#6a6a6a"></div><div class="body" style="left:54.4px;top:239.6px"></div>
<div class="lbl" style="left:42px;top:249.54px;width:44px"></div><div class="lt" id="l16" style="left:66.8px;top:251.84px">ball (6)</div><div class="eye" style="left:43.3px;top:251.54px"></div><div class="abs" style="left:45.8px;top:252.54px;width:2px;height:2px;border-radius:50%;background:#6a6a6a"></div><div class="body" style="left:54.4px;top:250.14px"></div>
<div class="lbl" style="left:42px;top:260.08px;width:44px"></div><div class="lt" id="l17" style="left:66.8px;top:262.38px">ball (7)</div><div class="eye" style="left:43.3px;top:262.08px"></div><div class="abs" style="left:45.8px;top:263.08px;width:2px;height:2px;border-radius:50%;background:#6a6a6a"></div><div class="body" style="left:54.4px;top:260.68px"></div>
<div class="lbl" style="left:42px;top:270.62px;width:44px"></div><div class="lt" id="l18" style="left:66.8px;top:272.92px">ball (8)</div><div class="eye" style="left:43.3px;top:272.62px"></div><div class="abs" style="left:45.8px;top:273.62px;width:2px;height:2px;border-radius:50%;background:#6a6a6a"></div><div class="body" style="left:54.4px;top:271.22px"></div>
<div class="lbl" style="left:42px;top:281.15999999999997px;width:44px"></div><div class="lt" id="l19" style="left:66.8px;top:283.46px">ball (9)</div><div class="eye" style="left:43.3px;top:283.15999999999997px"></div><div class="abs" style="left:45.8px;top:284.15999999999997px;width:2px;height:2px;border-radius:50%;background:#6a6a6a"></div><div class="body" style="left:54.4px;top:281.76px"></div>
<div class="lbl" style="left:42px;top:291.7px;width:46.5px"></div><div class="lt" id="l20" style="left:66.8px;top:294.0px">ball (10)</div><div class="eye" style="left:43.3px;top:293.7px"></div><div class="abs" style="left:45.8px;top:294.7px;width:2px;height:2px;border-radius:50%;background:#6a6a6a"></div><div class="body" style="left:54.4px;top:292.3px"></div>
<div class="lbl" style="left:42px;top:302.24px;width:46.5px"></div><div class="lt" id="l21" style="left:66.8px;top:304.54px">ball (11)</div><div class="eye" style="left:43.3px;top:304.24px"></div><div class="abs" style="left:45.8px;top:305.24px;width:2px;height:2px;border-radius:50%;background:#6a6a6a"></div><div class="body" style="left:54.4px;top:302.84000000000003px"></div>
<div class="lbl" style="left:42px;top:312.78px;width:68.8px"></div><div class="lt" id="l22" style="left:66.8px;top:315.08px">outer_ring_bottom</div><div class="eye off" style="left:43.3px;top:314.78px"></div><div class="abs" style="left:45.8px;top:315.78px;width:2px;height:2px;border-radius:50%;background:#eee"></div><div class="body" style="left:54.4px;top:313.38px"></div>
<div class="lbl" style="left:34px;top:323.32px;width:49px"></div><div class="lt" id="l23" style="left:60px;top:325.62px">Sketches</div><svg class="abs" style="left:25.8px;top:325.42px" width="4.4" height="5.2" viewBox="0 0 4.4 5.2"><path d="M0.5,0.5 L3.9,2.6 L0.5,4.7Z" fill="#fff" stroke="#444" stroke-width="0.6"/></svg><div class="eye" style="left:35.1px;top:325.32px"></div><div class="abs" style="left:37.6px;top:326.32px;width:2px;height:2px;border-radius:50%;background:#6a6a6a"></div><div class="fold" style="left:46.0px;top:324.62px"></div>
<div class="lbl" style="left:34px;top:333.86px;width:56.5px"></div><div class="lt" id="l24" style="left:60px;top:336.16px">Construction</div><svg class="abs" style="left:25.8px;top:335.96000000000004px" width="4.4" height="5.2" viewBox="0 0 4.4 5.2"><path d="M0.5,0.5 L3.9,2.6 L0.5,4.7Z" fill="#fff" stroke="#444" stroke-width="0.6"/></svg><div class="eye" style="left:35.1px;top:335.86px"></div><div class="abs" style="left:37.6px;top:336.86px;width:2px;height:2px;border-radius:50%;background:#6a6a6a"></div><div class="fold" style="left:46.0px;top:335.16px"></div>
<svg class="abs" style="left:580px;top:68px" width="50" height="56" viewBox="580 68 50 56"><path d="M592.5,82.1 L608.5,76.1 L622,87.1 L621.8,102.2 L606,109.8 L592.5,97.8Z" fill="#ececec"/><path d="M592.5,82.1 L608.5,76.1 L622,87.1 L604.8,93.8Z" fill="#ebebeb"/><path d="M604.8,93.8 L622,87.1 L621.8,102.2 L606,109.8Z" fill="#e3e3e3"/><path d="M592.5,82.1 L604.8,93.8 L606,109.8 L592.5,97.8Z" fill="#eeeeee"/><path d="M592.5,82.1 L604.8,93.8 L622,87.1 M604.8,93.8 L606,109.8" stroke="#f6f6f6" stroke-width="0.8" fill="none"/><path d="M590.3,79 L593,97.8" stroke="#9a9aea" stroke-width="0.8"/><path d="M593,97.8 L603.5,113.6" stroke="#f0a0aa" stroke-width="0.8"/><text x="588.2" y="78.6" font-size="5.6" fill="#7a7ae4" font-family="Liberation Sans, sans-serif">Z</text><text x="603" y="117.6" font-size="5.6" fill="#f27886" font-family="Liberation Sans, sans-serif">X</text><text x="602.5" y="87.5" font-size="3.6" fill="#cfcfcf" font-family="Liberation Sans, sans-serif" transform="rotate(-18 602.5 87.5)">TOP</text><text x="607.5" y="102.5" font-size="3.6" fill="#c6c6c6" font-family="Liberation Sans, sans-serif" transform="rotate(-22 607.5 102.5)">FRONT</text></svg>
<div class="abs" style="left:3px;top:520px;width:130.5px;height:10px;background:#f0f0f0;border:0.5px dotted #e0e0e0"></div>
<div class="t" id="cm" style="left:13px;top:523px;font-size:4.6px;color:#858585;letter-spacing:0.1px">COMMENTS</div>
<div class="abs" style="left:124.8px;top:523.2px;width:3.6px;height:3.6px;border-radius:50%;background:#3d3d3d"></div>
<div class="abs" style="left:0;top:531px;width:634px;height:24px;background:#f1f1f1"></div>
<svg class="abs" style="left:262px;top:517px" width="112" height="14" viewBox="262 517 112 14"><g fill="#777"><path d="M270.3,520.6 v6.8 M266.9,524 h6.8" stroke="#666" stroke-width="0.8"/><circle cx="270.3" cy="524" r="1.5"/><path d="M275.6,523.6 h2.2 l-1.1,1.3z"/><rect x="280.2" y="522" width="5.6" height="4" rx="0.6" fill="#8a8a8a"/><rect x="281.6" y="520.8" width="2.8" height="1.4" fill="#8a8a8a"/></g><rect x="291.4" y="519.4" width="9.6" height="9.6" fill="#1976d2"/><path d="M293.8,524.6 v-2.4 h0.9 v-0.8 h0.9 v-0.3 h0.9 v0.5 h0.9 v0.8 h0.9 v3.2 q0,1.6 -1.6,1.6 h-1.2 q-1,0 -1.7,-1.6z" fill="#fff"/><circle cx="305.4" cy="523.4" r="2.1" fill="none" stroke="#777" stroke-width="0.7"/><path d="M306.9,524.9 l1.8,1.8" stroke="#777" stroke-width="0.8"/><path d="M307.4,521 h1.6 M308.2,520.2 v1.6" stroke="#999" stroke-width="0.4"/><circle cx="318.4" cy="523.4" r="2.3" fill="#eef" stroke="#777" stroke-width="0.7"/><path d="M320,525 l1.8,1.8" stroke="#777" stroke-width="0.8"/><path d="M323.4,523.6 h2.2 l-1.1,1.3z" fill="#555"/><rect x="330" y="520.8" width="6.4" height="4.6" fill="#5b8fc7" stroke="#666" stroke-width="0.5"/><rect x="332" y="526" width="2.4" height="1" fill="#666"/><path d="M338.4,523.6 h2.2 l-1.1,1.3z" fill="#555"/><rect x="342.6" y="520.8" width="6.4" height="5.6" fill="#9a9a9a"/><path d="M342.6,522.7 h6.4 M342.6,524.6 h6.4 M344.7,520.8 v5.6 M346.9,520.8 v5.6" stroke="#e8e8e8" stroke-width="0.4"/><path d="M350.6,523.6 h2.2 l-1.1,1.3z" fill="#555"/><rect x="356.4" y="520.8" width="6.6" height="5.6" fill="#5b8fc7" stroke="#666" stroke-width="0.5"/><path d="M359.7,520.8 v5.6 M356.4,523.6 h6.6" stroke="#eee" stroke-width="0.5"/><path d="M365,523.6 h2.2 l-1.1,1.3z" fill="#555"/></svg>
<svg class="abs" style="left:0;top:536px" width="60" height="14" viewBox="0 536 60 14"><g fill="#4a4a4a"><rect x="4.6" y="540.4" width="0.9" height="5.2"/><path d="M9.6,540.4 v5.2 l-3.8,-2.6z"/><path d="M19.8,540.8 v4.4 l-3.4,-2.2z" fill="#666"/><rect x="20" y="542.4" width="1.2" height="1.2" fill="#666"/><path d="M27.6,539.8 v6.4 l4.6,-3.2z"/><path d="M38.6,540.8 v4.4 l3.4,-2.2z" fill="#666"/><rect x="37.2" y="542.4" width="1.2" height="1.2" fill="#666"/><path d="M49,540.4 v5.2 l3.8,-2.6z"/><rect x="53" y="540.4" width="0.9" height="5.2"/></g></svg>
<svg class="abs" style="left:60px;top:535px" width="160" height="18" viewBox="60 535 160 18"><path d="M68.8,550.2 H207" stroke="#c4c4c4" stroke-width="0.5"/><path d="M68.8,548.4 v1.8" stroke="#bcbcbc" stroke-width="0.5"/><rect x="65.8" y="540" width="6" height="5.8" fill="#f4eedf" stroke="#d8c9a4" stroke-width="0.5"/><rect x="68.8" y="539.2" width="3.2" height="3.2" fill="#f2ae3d"/><path d="M79.4,548.4 v1.8" stroke="#bcbcbc" stroke-width="0.5"/><rect x="76.4" y="539.8" width="6" height="6" fill="#ececea" stroke="#c9c9c4" stroke-width="0.5"/><path d="M77.80000000000001,544.6 l3.4,-3.4" stroke="#e3b866" stroke-width="0.7"/><path d="M89.9,548.4 v1.8" stroke="#bcbcbc" stroke-width="0.5"/><rect x="86.9" y="539.8" width="6" height="6" fill="#ececea" stroke="#c9c9c4" stroke-width="0.5"/><path d="M88.30000000000001,544.6 l3.4,-3.4" stroke="#e3b866" stroke-width="0.7"/><path d="M100.5,548.4 v1.8" stroke="#bcbcbc" stroke-width="0.5"/><path d="M97.3,546 q0,-6.4 3.2,-6.4 q3.2,0 3.2,6.4 h-1.9 q0,-3.2 -1.3,-3.2 q-1.3,0 -1.3,3.2z" fill="#3f90e0"/><path d="M111.0,548.4 v1.8" stroke="#bcbcbc" stroke-width="0.5"/><circle cx="111.0" cy="542.8" r="3.1" fill="#3f90e0"/><circle cx="110.3" cy="542" r="1.2" fill="#86c2f3"/><path d="M121.6,548.4 v1.8" stroke="#bcbcbc" stroke-width="0.5"/><circle cx="121.6" cy="542.8" r="2.3" fill="#f4f9fe" stroke="#58a2e6" stroke-width="0.8"/><path d="M121.6,539.4 v6.8" stroke="#58a2e6" stroke-width="0.5"/><path d="M132.2,548.4 v1.8" stroke="#bcbcbc" stroke-width="0.5"/><rect x="129.2" y="539.8" width="6" height="6" fill="#ececea" stroke="#c9c9c4" stroke-width="0.5"/><path d="M130.6,544.6 l3.4,-3.4" stroke="#e3b866" stroke-width="0.7"/><path d="M142.7,548.4 v1.8" stroke="#bcbcbc" stroke-width="0.5"/><rect x="139.7" y="539.8" width="6" height="6" fill="#dcdcdc" stroke="#b5b5b5" stroke-width="0.5"/><rect x="141.29999999999998" y="541.4" width="3.2" height="3.2" fill="#8db6e0"/><path d="M153.3,548.4 v1.8" stroke="#bcbcbc" stroke-width="0.5"/><circle cx="153.3" cy="542.8" r="2.3" fill="#f4f9fe" stroke="#58a2e6" stroke-width="0.8"/><path d="M153.3,539.4 v6.8" stroke="#58a2e6" stroke-width="0.5"/><path d="M163.8,548.4 v1.8" stroke="#bcbcbc" stroke-width="0.5"/><rect x="160.8" y="539.8" width="6" height="6" fill="#ececea" stroke="#c9c9c4" stroke-width="0.5"/><path d="M162.20000000000002,544.6 l3.4,-3.4" stroke="#e3b866" stroke-width="0.7"/><path d="M174.4,548.4 v1.8" stroke="#bcbcbc" stroke-width="0.5"/><rect x="171.4" y="539.8" width="6" height="6" fill="#dcdcdc" stroke="#b5b5b5" stroke-width="0.5"/><rect x="173.0" y="541.4" width="3.2" height="3.2" fill="#8db6e0"/><path d="M185.0,548.4 v1.8" stroke="#bcbcbc" stroke-width="0.5"/><circle cx="185.0" cy="542.8" r="2.3" fill="#f4f9fe" stroke="#58a2e6" stroke-width="0.8"/><path d="M185.0,539.4 v6.8" stroke="#58a2e6" stroke-width="0.5"/><path d="M195.5,548.4 v1.8" stroke="#bcbcbc" stroke-width="0.5"/><rect x="192.7" y="540.2" width="5.6" height="5.2" fill="#f6e3d8" stroke="#e3a98a" stroke-width="0.5"/><path d="M194.1,544.4 v-3 M195.9,544.4 v-3" stroke="#e0805a" stroke-width="0.5"/><path d="M206.1,548.4 v1.8" stroke="#bcbcbc" stroke-width="0.5"/><rect x="202.9" y="539.6" width="6.4" height="2.8" fill="#3f90e0"/><rect x="202.9" y="542.4" width="6.4" height="3.6" fill="#c4ddf4" stroke="#86b2de" stroke-width="0.4"/><path d="M209,537.6 h4.4 l-2.2,2.6z" fill="#3a3a3a"/><rect x="210.8" y="539" width="0.9" height="11.6" fill="#3a3a3a"/></svg>
<div class="abs" style="left:621.2px;top:540.2px;width:5.6px;height:5.6px;border-radius:50%;background:#555"></div><div class="abs" style="left:623px;top:542px;width:2px;height:2px;border-radius:50%;background:#f1f1f1"></div>
<div class="abs" style="left:0;top:0;width:634px;height:1px;background:#a9a9a9"></div>
<div class="abs" style="left:0;top:0;width:1px;height:555px;background:#8a8a8a"></div>
<div class="abs" style="left:0;top:554px;width:634px;height:1px;background:#6a6a6a"></div>
</body></html>
